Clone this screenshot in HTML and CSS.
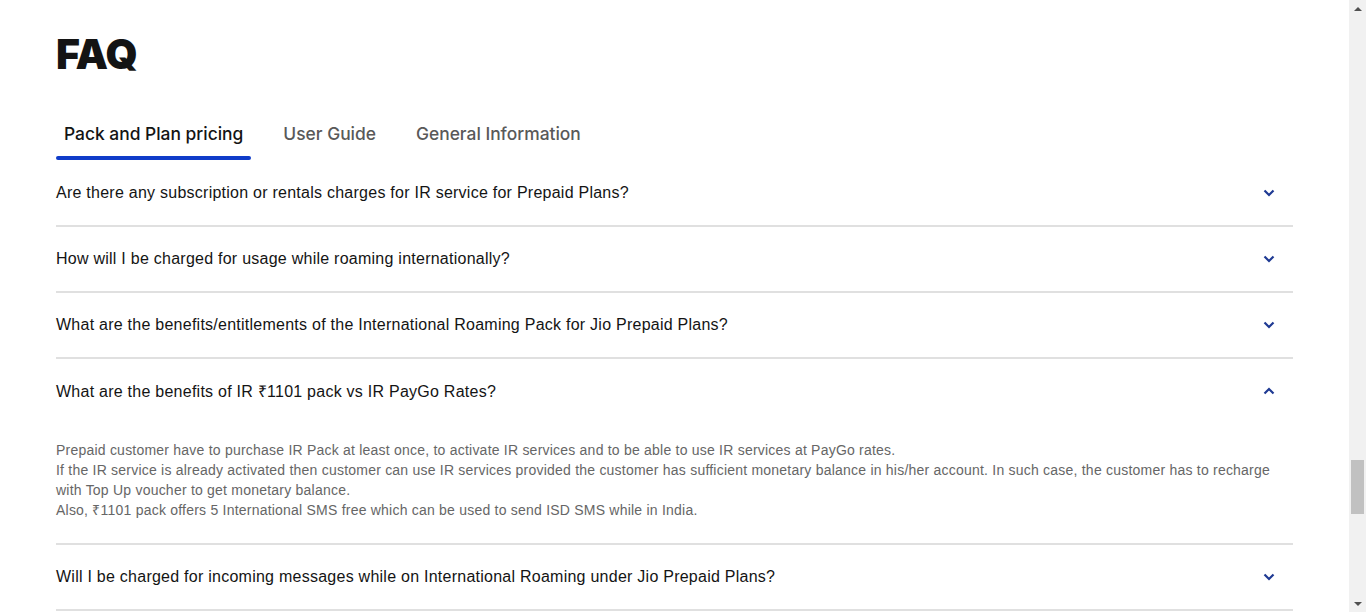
FILE: index.html
```html
<!DOCTYPE html>
<html lang="en">
<head>
<meta charset="utf-8">
<title>FAQ</title>
<link rel="stylesheet" href="styles.css">
</head>
<body>
<div class="page">
  <main class="content">
    <h1 class="title">FAQ</h1>
    <nav class="tabs">
      <button class="tab active">Pack and Plan pricing</button>
      <button class="tab">User Guide</button>
      <button class="tab">General Information</button>
    </nav>
    <div class="faq">
      <div class="item">
        <div class="q"><span>Are there any subscription or rentals charges for IR service for Prepaid Plans?</span>
          <svg class="chev" viewBox="0 0 12 8" width="12" height="8"><path d="M1.5 1.5 6 6l4.5-4.5" fill="none" stroke="#1f3a93" stroke-width="2.2"/></svg></div>
      </div>
      <div class="item">
        <div class="q"><span>How will I be charged for usage while roaming internationally?</span>
          <svg class="chev" viewBox="0 0 12 8" width="12" height="8"><path d="M1.5 1.5 6 6l4.5-4.5" fill="none" stroke="#1f3a93" stroke-width="2.2"/></svg></div>
      </div>
      <div class="item">
        <div class="q"><span>What are the benefits/entitlements of the International Roaming Pack for Jio Prepaid Plans?</span>
          <svg class="chev" viewBox="0 0 12 8" width="12" height="8"><path d="M1.5 1.5 6 6l4.5-4.5" fill="none" stroke="#1f3a93" stroke-width="2.2"/></svg></div>
      </div>
      <div class="item open">
        <div class="q"><span>What are the benefits of IR ₹1101 pack vs IR PayGo Rates?</span>
          <svg class="chev" viewBox="0 0 12 8" width="12" height="8"><path d="M1.5 6.5 6 2l4.5 4.5" fill="none" stroke="#1f3a93" stroke-width="2.2"/></svg></div>
        <div class="a">Prepaid customer have to purchase IR Pack at least once, to activate IR services and to be able to use IR services at PayGo rates.<br>If the IR service is already activated then customer can use IR services provided the customer has sufficient monetary balance in his/her account. In such case, the customer has to recharge with Top Up voucher to get monetary balance.<br>Also, ₹1101 pack offers 5 International SMS free which can be used to send ISD SMS while in India.</div>
      </div>
      <div class="item">
        <div class="q"><span>Will I be charged for incoming messages while on International Roaming under Jio Prepaid Plans?</span>
          <svg class="chev" viewBox="0 0 12 8" width="12" height="8"><path d="M1.5 1.5 6 6l4.5-4.5" fill="none" stroke="#1f3a93" stroke-width="2.2"/></svg></div>
      </div>
    </div>
  </main>
  <div class="scrollbar">
    <div class="arrow up"></div>
    <div class="track">
      <div class="thumb"></div>
    </div>
    <div class="arrow down"></div>
  </div>
</div>
</body>
</html>
```

FILE: styles.css
```css
* { box-sizing: border-box; }
html, body { margin: 0; padding: 0; height: 100%; overflow: hidden; background: #fff; }
body { font-family: "Liberation Sans", Arial, sans-serif; color: #141414; }

.page { display: flex; height: 612px; }
.content { flex: 1; padding: 0 56px; min-width: 0; }

.title {
  margin: 0;
  padding-top: 30px;
  height: 94px;
  font-family: Inter, sans-serif;
  font-weight: 900;
  font-size: 41px;
  line-height: 48px;
  letter-spacing: -0.6px;
  color: #141414;
}

.tabs { display: flex; height: 66px; }
.tab {
  border: none;
  background: none;
  padding: 12px 8px 0;
  margin-right: 24px;
  height: 66px;
  font-family: Inter, sans-serif;
  font-size: 17.4px;
  font-weight: 500;
  color: #595959;
  position: relative;
  cursor: pointer;
  display: flex;
  align-items: center;
}
.tab.active { color: #141414; }
.tab.active::after {
  content: "";
  position: absolute;
  left: 0; right: 0; bottom: 0;
  height: 4px;
  border-radius: 2px;
  background: #0f3cc9;
}

.faq { display: flex; flex-direction: column; margin-top: 1px; }
.item { border-bottom: 2px solid #e0e0e0; }
.q {
  height: 64px;
  display: flex;
  align-items: center;
  justify-content: space-between;
  font-size: 16px;
  letter-spacing: 0.25px;
  color: #141414;
}
.chev { margin-right: 18px; }
.a {
  padding: 17px 0 23px;
  font-size: 14px;
  letter-spacing: 0.22px;
  line-height: 20px;
  color: #666;
}

.scrollbar {
  width: 17px;
  background: #f1f1f1;
  display: flex;
  flex-direction: column;
  align-items: center;
}
.arrow { height: 17px; width: 17px; display: flex; align-items: center; justify-content: center; }
.arrow::before { content: ""; border-left: 4px solid transparent; border-right: 4px solid transparent; }
.arrow.up::before { border-bottom: 4px solid #505050; }
.arrow.down::before { border-top: 4px solid #505050; }
.track { flex: 1; width: 100%; display: flex; flex-direction: column; align-items: center; }
.thumb { margin-top: 443px; width: 13px; height: 54px; background: #c1c1c1; }
```
